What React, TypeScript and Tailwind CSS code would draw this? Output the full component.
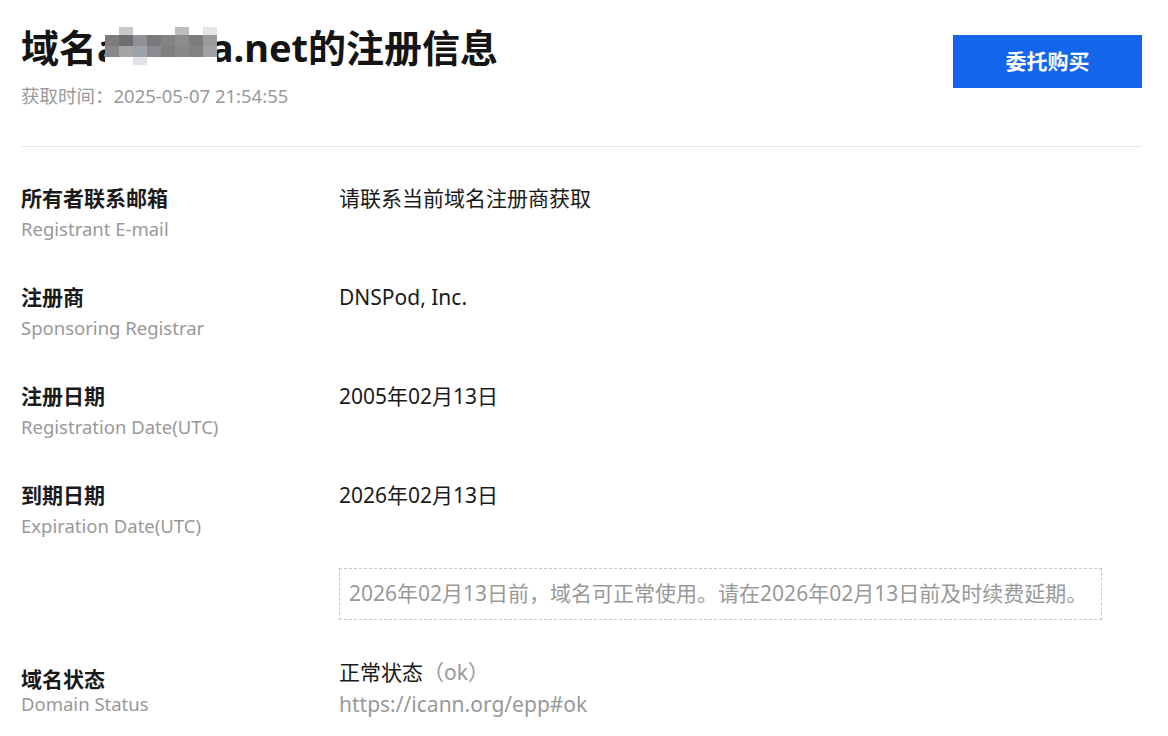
const FONT = "font-['Noto_Sans','Noto_Sans_CJK_SC',sans-serif]";

// pixelated redaction over the domain name
const MOSAIC: string[][] = [
  ["#ffffff", "#7c7c7e", "#88888a", "#ffffff"],
  ["#c9c9cb", "#6f6f72", "#a6a4a3", "#ffffff"],
  ["#ffffff", "#8f9196", "#9ea3a9", "#dfe3e8"],
  ["#ffffff", "#7a7a7c", "#8b8b8d", "#ffffff"],
  ["#ffffff", "#838385", "#7e7e80", "#ffffff"],
  ["#bdbbbb", "#8c8c8e", "#88888a", "#ffffff"],
  ["#ffffff", "#7d7d80", "#828285", "#ffffff"],
  ["#e6e6e6", "#9a9a9c", "#a2a2a4", "#ffffff"],
];

function Mosaic() {
  return (
    <span className="absolute top-[4px] left-[84px] flex h-[38px] w-[112px]">
      {MOSAIC.map((col, i) => (
        <span key={i} className="flex flex-1 flex-col">
          {col.map((c, j) => (
            <span
              key={j}
              className={j === 0 || j === 3 ? "h-[8px]" : "h-[11px]"}
              style={{ backgroundColor: c }}
            />
          ))}
        </span>
      ))}
    </span>
  );
}

type Row = {
  label: string;
  en: string;
  value: string;
};

const rows: Row[] = [
  { label: "所有者联系邮箱", en: "Registrant E-mail", value: "请联系当前域名注册商获取" },
  { label: "注册商", en: "Sponsoring Registrar", value: "DNSPod, Inc." },
  { label: "注册日期", en: "Registration Date(UTC)", value: "2005年02月13日" },
];

function Label({ label, en }: { label: string; en: string }) {
  return (
    <div>
      <div className="text-[21px] leading-[28px] font-bold text-[#1a1a1a]">{label}</div>
      <div className="mt-1 text-[18.5px] leading-[26px] text-[#999999]">{en}</div>
    </div>
  );
}

export default function App() {
  return (
    <div className={`min-h-screen bg-white pr-[26px] pl-[21px] ${FONT}`}>
      <header className="flex items-start justify-between border-b border-[#e6e6e6] pt-[23px] pb-[38px]">
        <div>
          <h1 className="relative text-[38px] leading-[48px] font-bold whitespace-nowrap text-[#141414]">
            域名a<span className="inline-block w-[91px]" />a.net的注册信息
            <Mosaic />
          </h1>
          <p className="mt-[13px] text-[18.5px] leading-[24px] text-[#999999]">
            获取时间：2025-05-07 21:54:55
          </p>
        </div>
        <button
          type="button"
          className="mt-[12px] h-[53px] w-[189px] bg-[#1366ec] text-[21px] font-bold text-white"
        >
          委托购买
        </button>
      </header>

      <div className="pt-[37px]">
        {rows.map((r) => (
          <div key={r.label} className="grid grid-cols-[318px_1fr] pb-[41px]">
            <Label label={r.label} en={r.en} />
            <div className="text-[21px] leading-[28px] text-[#1a1a1a]">{r.value}</div>
          </div>
        ))}

        <div className="grid grid-cols-[318px_1fr]">
          <Label label="到期日期" en="Expiration Date(UTC)" />
          <div>
            <div className="text-[21px] leading-[28px] text-[#1a1a1a]">2026年02月13日</div>
            <div className="mt-[59px] flex h-[52px] w-[763px] items-center border border-dashed border-[#c8c8c8] px-[9px] text-[21px] text-[#999999]">
              2026年02月13日前，域名可正常使用。请在2026年02月13日前及时续费延期。
            </div>
          </div>
        </div>

        <div className="mt-[38px] grid grid-cols-[318px_1fr]">
          <div className="pt-[7px]">
            <div className="text-[21px] leading-[28px] font-bold text-[#1a1a1a]">域名状态</div>
            <div className="text-[18.5px] leading-[22px] text-[#999999]">Domain Status</div>
          </div>
          <div>
            <div className="text-[21px] leading-[28px] text-[#1a1a1a]">
              正常状态<span className="text-[#999999]">（ok）</span>
            </div>
            <div className="mt-[4px] text-[21px] leading-[28px] text-[#999999]">
              https://icann.org/epp#ok
            </div>
          </div>
        </div>
      </div>
    </div>
  );
}
